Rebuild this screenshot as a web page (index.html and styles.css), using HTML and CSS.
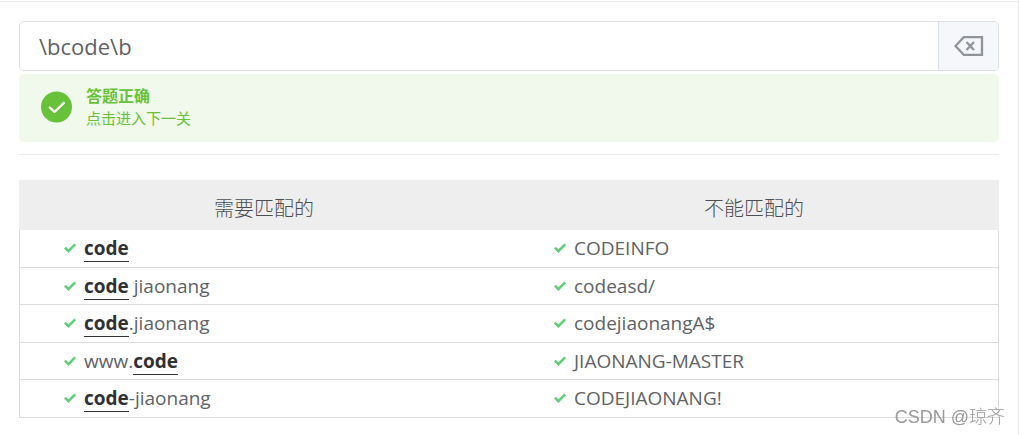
FILE: index.html
```html
<!DOCTYPE html>
<html lang="zh-CN">
<head>
<meta charset="utf-8">
<meta name="viewport" content="width=device-width, initial-scale=1">
<title>正则练习</title>
<link rel="stylesheet" href="styles.css">
</head>
<body>
<svg class="sprite" aria-hidden="true">
  <symbol id="tick" viewBox="0 0 12 10"><path d="M.8 4.6 4.4 8.2 11.2 1.4" fill="none" stroke="currentColor" stroke-width="2.5"/></symbol>
</svg>
<main class="panel">
  <form class="answer">
    <input class="answer-input" type="text" aria-label="正则表达式" value="\bcode\b">
    <button class="answer-clear" type="button" aria-label="清空">
      <svg class="clear-icon" viewBox="0 0 30 20" aria-hidden="true"><path d="M10 1H28V19H10L1.5 10Z" fill="none" stroke="currentColor" stroke-width="2.3"/><path d="M12.5 6 20 14M20 6 12.5 14" fill="none" stroke="currentColor" stroke-width="2.3"/></svg>
    </button>
  </form>
  <section class="alert" role="status">
    <svg class="alert-icon" viewBox="0 0 32 32" aria-hidden="true"><circle cx="15.5" cy="16" r="15.5" fill="currentColor"/><path d="M8.8 16.5 13.5 21 22.8 12" fill="none" stroke="#fff" stroke-width="2.4" stroke-linecap="round" stroke-linejoin="round"/></svg>
    <div class="alert-body">
      <strong class="alert-title">答题正确</strong>
      <a class="alert-link" href="#">点击进入下一关</a>
    </div>
  </section>
  <hr class="divider">
  <table class="cases">
    <thead>
      <tr><th scope="col">需要匹配的</th><th scope="col">不能匹配的</th></tr>
    </thead>
    <tbody>
      <tr>
        <td><div class="case"><svg class="tick"><use href="#tick"/></svg><span><b class="hit">code</b></span></div></td>
        <td><div class="case"><svg class="tick"><use href="#tick"/></svg><span>CODEINFO</span></div></td>
      </tr>
      <tr>
        <td><div class="case"><svg class="tick"><use href="#tick"/></svg><span><b class="hit">code</b> jiaonang</span></div></td>
        <td><div class="case"><svg class="tick"><use href="#tick"/></svg><span>codeasd/</span></div></td>
      </tr>
      <tr>
        <td><div class="case"><svg class="tick"><use href="#tick"/></svg><span><b class="hit">code</b>.jiaonang</span></div></td>
        <td><div class="case"><svg class="tick"><use href="#tick"/></svg><span>codejiaonangA$</span></div></td>
      </tr>
      <tr>
        <td><div class="case"><svg class="tick"><use href="#tick"/></svg><span>www.<b class="hit">code</b></span></div></td>
        <td><div class="case"><svg class="tick"><use href="#tick"/></svg><span>JIAONANG-MASTER</span></div></td>
      </tr>
      <tr>
        <td><div class="case"><svg class="tick"><use href="#tick"/></svg><span><b class="hit">code</b>-jiaonang</span></div></td>
        <td><div class="case"><svg class="tick"><use href="#tick"/></svg><span>CODEJIAONANG!</span></div></td>
      </tr>
    </tbody>
  </table>
</main>
<div class="watermark">CSDN @琼齐</div>
</body>
</html>
```

FILE: styles.css
```css
* {
  box-sizing: border-box;
}

body {
  margin: 0;
  padding-top: 1px;
  background: #fff;
  color: #606266;
  font-family: "Open Sans", "Noto Sans CJK SC", sans-serif;
  font-size: 19px;
}

.sprite {
  display: none;
}

.panel {
  min-height: calc(100vh - 1px);
  margin-right: 1px;
  padding: 19px 19px 17px;
  border-top: 1px solid #ebebeb;
  border-right: 1px solid #ebebeb;
}

.answer {
  display: flex;
  height: 50px;
  border: 1px solid #dcdfe6;
  border-radius: 5px;
  overflow: hidden;
}

.answer-input {
  flex: 1;
  min-width: 0;
  padding: 0 19px;
  border: 0;
  outline: 0;
  background: #fff;
  color: #606266;
  font-family: inherit;
  font-size: 22px;
}

.answer-clear {
  display: flex;
  align-items: center;
  justify-content: center;
  width: 60px;
  padding: 0;
  border: 0;
  border-left: 1px solid #dcdfe6;
  background: #f5f7fa;
  color: #909399;
}

.clear-icon {
  width: 30px;
  height: 20px;
}

.alert {
  display: flex;
  align-items: center;
  gap: 13px;
  margin-top: 3px;
  padding: 11px 22px 13px;
  border-radius: 5px;
  background: #f0f9eb;
  color: #67c23a;
}

.alert-icon {
  width: 32px;
  height: 32px;
}

.alert-body {
  display: flex;
  flex-direction: column;
}

.alert-title {
  font-size: 16px;
  line-height: 22px;
}

.alert-link {
  color: inherit;
  font-size: 15px;
  line-height: 22px;
  text-decoration: none;
}

.divider {
  height: 1px;
  margin: 12px 0 25px;
  border: 0;
  background: #ebebeb;
}

.cases {
  width: 100%;
  border-spacing: 0;
  table-layout: fixed;
}

.cases th {
  height: 50px;
  padding: 8px 0 0;
  background: #eee;
  color: #4c4e52;
  font-size: 20px;
  font-weight: 300;
  line-height: 30px;
}

.cases td {
  height: 38px;
  padding: 0 0 1px 45px;
  border-bottom: 1px solid #dcdcdc;
}

.cases tr:nth-child(even) td {
  height: 37px;
  padding-bottom: 0;
}

.cases td:first-child {
  padding-left: 44px;
  border-left: 1px solid #dcdcdc;
}

.cases td:last-child {
  border-right: 1px solid #dcdcdc;
}

.case {
  display: flex;
  align-items: center;
  gap: 8px;
  line-height: 30px;
}

.tick {
  width: 12px;
  height: 10px;
  color: #5fcf76;
}

.hit {
  border-bottom: 1px solid #303133;
  color: #303133;
}

.watermark {
  position: fixed;
  right: 15px;
  bottom: 3px;
  color: #999;
  font-family: "Liberation Sans", "Noto Sans CJK SC", sans-serif;
  font-size: 18px;
  font-weight: 300;
  line-height: 30px;
}
```
